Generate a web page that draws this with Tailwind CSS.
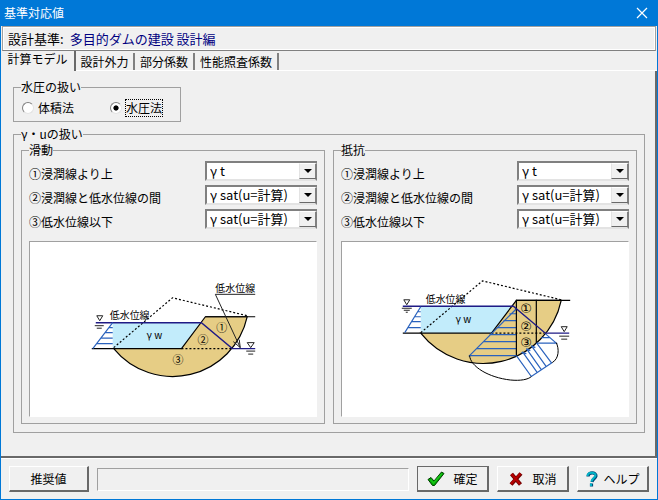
<!DOCTYPE html>
<html lang="ja">
<head>
  <meta charset="UTF-8">
  <meta name="viewport" content="width=device-width, initial-scale=1.0">
  <title>基準対応値</title>
  <script src="https://cdn.jsdelivr.net/npm/@tailwindcss/browser@4"></script>
</head>
<body class="min-h-screen flex flex-col bg-[#f0f0f0] border-x border-b border-[#0078d7] font-['Noto_Sans_CJK_JP',sans-serif] text-[12px] leading-4 text-black">

  <!-- タイトルバー -->
  <header class="h-[26px] flex items-center justify-between bg-[#0078d7] text-white pl-[3px] pr-[9px]">
    <h1>基準対応値</h1>
    <button type="button" aria-label="閉じる" class="w-3 h-3">
      <svg viewBox="0 0 12 12" class="w-3 h-3" fill="none" stroke="currentColor" stroke-width="1.2"><path d="M1 1L11 11M11 1L1 11"/></svg>
    </button>
  </header>

  <div class="h-[25px] flex items-center gap-[6px] border-t border-l border-r border-b border-t-[#a0a0a0] border-l-[#a0a0a0] border-r-[#a0a0a0] border-b-[#808080] outline outline-white -outline-offset-2 px-[5px] mx-px text-[13px]">
    <span>設計基準:</span>
    <span class="text-[#000080]">多目的ダムの建設 設計編</span>
  </div>

  <!-- タブ -->
  <div role="tablist" class="h-5 flex items-end">
    <button type="button" role="tab" aria-selected="true" class="h-5 w-[75px] pb-1 border-r-2 border-[#696969]">計算モデル</button>
    <div class="flex-1 flex border-b border-white">
      <button type="button" role="tab" class="h-[17px] w-[59px] border-r-2 border-[#808080]">設計外力</button>
      <button type="button" role="tab" class="h-[17px] w-[60px] border-r-2 border-[#808080]">部分係数</button>
      <button type="button" role="tab" class="h-[17px] w-[84px] border-r-2 border-[#808080]">性能照査係数</button>
    </div>
  </div>

  <main class="flex-1 border-r-2 border-b-2 border-[#696969] pt-2 pl-3 pr-[10px]">
    <fieldset class="w-[168px] h-[43px] border border-[#a0a0a0] pl-2">
      <legend class="-ml-px">水圧の扱い</legend>
      <div class="flex pt-[5px]">
        <label class="w-[88px] flex items-center gap-1">
          <input type="radio" name="method" class="appearance-none w-3 h-3 rounded-full bg-white border border-t-[#808080] border-l-[#808080] border-r-[#e3e3e3] border-b-[#e3e3e3] checked:bg-radial checked:from-black checked:from-[2px] checked:to-white checked:to-[3px]">
          <span>体積法</span>
        </label>
        <label class="flex items-center gap-1">
          <input type="radio" name="method" checked class="appearance-none w-3 h-3 rounded-full bg-white border border-t-[#808080] border-l-[#808080] border-r-[#e3e3e3] border-b-[#e3e3e3] checked:bg-radial checked:from-black checked:from-[2px] checked:to-white checked:to-[3px]">
          <span class="outline-1 outline-dotted outline-black">水圧法</span>
        </label>
      </div>
    </fieldset>

    <fieldset class="mt-1 border border-[#a0a0a0] px-[7px] pb-2">
      <legend>γ・uの扱い</legend>
      <div class="grid grid-cols-2 gap-2">

        <fieldset class="border border-[#a0a0a0] px-[7px] pb-[6px]">
          <legend>滑動</legend>
          <div class="flex flex-col gap-1 pt-[3px]">
            <div class="flex items-end justify-between">
              <label for="s1" class="-mb-px">①浸潤線より上</label>
              <div class="relative w-28 h-5">
                <select id="s1" class="appearance-none block w-full h-5 pl-[3px] text-[13px] leading-4 bg-white border-2 border-t-[#808080] border-l-[#808080] border-r-[#808080] border-b-[#e3e3e3]"><option>γ t</option></select>
                <span class="absolute right-0 top-0.5 w-[18px] h-4 flex items-center justify-center pointer-events-none bg-[#f0f0f0] border border-r-2 border-t-white border-l-[#e3e3e3] border-r-[#808080] border-b-[#696969]"><svg viewBox="0 0 8 4" class="w-2 h-1"><path d="M0 0H8L4 4Z"/></svg></span>
              </div>
            </div>
            <div class="flex items-end justify-between">
              <label for="s2" class="-mb-px">②浸潤線と低水位線の間</label>
              <div class="relative w-28 h-5">
                <select id="s2" class="appearance-none block w-full h-5 pl-[3px] text-[13px] leading-4 bg-white border-2 border-t-[#808080] border-l-[#808080] border-r-[#808080] border-b-[#e3e3e3]"><option>γ sat(u=計算)</option></select>
                <span class="absolute right-0 top-0.5 w-[18px] h-4 flex items-center justify-center pointer-events-none bg-[#f0f0f0] border border-r-2 border-t-white border-l-[#e3e3e3] border-r-[#808080] border-b-[#696969]"><svg viewBox="0 0 8 4" class="w-2 h-1"><path d="M0 0H8L4 4Z"/></svg></span>
              </div>
            </div>
            <div class="flex items-end justify-between">
              <label for="s3" class="-mb-px">③低水位線以下</label>
              <div class="relative w-28 h-5">
                <select id="s3" class="appearance-none block w-full h-5 pl-[3px] text-[13px] leading-4 bg-white border-2 border-t-[#808080] border-l-[#808080] border-r-[#808080] border-b-[#e3e3e3]"><option>γ sat(u=計算)</option></select>
                <span class="absolute right-0 top-0.5 w-[18px] h-4 flex items-center justify-center pointer-events-none bg-[#f0f0f0] border border-r-2 border-t-white border-l-[#e3e3e3] border-r-[#808080] border-b-[#696969]"><svg viewBox="0 0 8 4" class="w-2 h-1"><path d="M0 0H8L4 4Z"/></svg></span>
              </div>
            </div>
          </div>
          <!-- 滑動側の断面図 -->
          <div class="mt-3 bg-white border border-t-[#a0a0a0] border-l-[#a0a0a0] border-r-white border-b-white">
            <svg viewBox="29 241 287 175" class="block w-full" fill="none" stroke-width="1.2">
              <path d="M112 322H200L181 348H112Z" fill="#c2ecfb"/>
              <path d="M113 348H181L205 316H247A76.6 76.6 0 0 1 113 348Z" fill="#e6cd85" stroke="#000"/>
              <path d="M205 316H255M91 348H113" stroke="#000"/>
              <path d="M181 348H232" stroke="#000" stroke-dasharray="2 2"/>
              <path d="M113 347L172 297L247 315" stroke="#000" stroke-dasharray="2 2"/>
              <path d="M95 322H201L232 348H255" stroke="#1f1a85" stroke-width="1.4"/>
              <path d="M112 322L92 348M108 327H112M104 332H112M100 337.500H112M96 343H112" stroke="#2a62bd"/>
              <path d="M96 315H102L99 320ZM94 325H103M96 327.500H101M247 342H254L250.500 347ZM246 350.500H255M248 353.500H253" stroke="#222" stroke-width="1"/>
              <path d="M255 293.500H215L240 347M233 341L240 347L239 339" stroke="#222" stroke-width="1"/>
              <g fill="#000" font-size="10">
                <text x="215" y="291">低水位線</text>
                <text x="109" y="318">低水位線</text>
                <text x="146" y="338">γ w</text>
              </g>
              <g fill="#000" font-size="11">
                <text x="216" y="331">①</text>
                <text x="197" y="343">②</text>
                <text x="172" y="363">③</text>
              </g>
            </svg>
          </div>
        </fieldset>

        <fieldset class="border border-[#a0a0a0] px-[7px] pb-[6px]">
          <legend>抵抗</legend>
          <div class="flex flex-col gap-1 pt-[3px]">
            <div class="flex items-end justify-between">
              <label for="r1" class="-mb-px">①浸潤線より上</label>
              <div class="relative w-28 h-5">
                <select id="r1" class="appearance-none block w-full h-5 pl-[3px] text-[13px] leading-4 bg-white border-2 border-t-[#808080] border-l-[#808080] border-r-[#808080] border-b-[#e3e3e3]"><option>γ t</option></select>
                <span class="absolute right-0 top-0.5 w-[18px] h-4 flex items-center justify-center pointer-events-none bg-[#f0f0f0] border border-r-2 border-t-white border-l-[#e3e3e3] border-r-[#808080] border-b-[#696969]"><svg viewBox="0 0 8 4" class="w-2 h-1"><path d="M0 0H8L4 4Z"/></svg></span>
              </div>
            </div>
            <div class="flex items-end justify-between">
              <label for="r2" class="-mb-px">②浸潤線と低水位線の間</label>
              <div class="relative w-28 h-5">
                <select id="r2" class="appearance-none block w-full h-5 pl-[3px] text-[13px] leading-4 bg-white border-2 border-t-[#808080] border-l-[#808080] border-r-[#808080] border-b-[#e3e3e3]"><option>γ sat(u=計算)</option></select>
                <span class="absolute right-0 top-0.5 w-[18px] h-4 flex items-center justify-center pointer-events-none bg-[#f0f0f0] border border-r-2 border-t-white border-l-[#e3e3e3] border-r-[#808080] border-b-[#696969]"><svg viewBox="0 0 8 4" class="w-2 h-1"><path d="M0 0H8L4 4Z"/></svg></span>
              </div>
            </div>
            <div class="flex items-end justify-between">
              <label for="r3" class="-mb-px">③低水位線以下</label>
              <div class="relative w-28 h-5">
                <select id="r3" class="appearance-none block w-full h-5 pl-[3px] text-[13px] leading-4 bg-white border-2 border-t-[#808080] border-l-[#808080] border-r-[#808080] border-b-[#e3e3e3]"><option>γ sat(u=計算)</option></select>
                <span class="absolute right-0 top-0.5 w-[18px] h-4 flex items-center justify-center pointer-events-none bg-[#f0f0f0] border border-r-2 border-t-white border-l-[#e3e3e3] border-r-[#808080] border-b-[#696969]"><svg viewBox="0 0 8 4" class="w-2 h-1"><path d="M0 0H8L4 4Z"/></svg></span>
              </div>
            </div>
          </div>
          <!-- 抵抗側の断面図 -->
          <div class="mt-3 bg-white border border-t-[#a0a0a0] border-l-[#a0a0a0] border-r-white border-b-white">
            <svg viewBox="341 241 287 175" class="block w-full" fill="none" stroke-width="1.2">
              <path d="M420 305H513L491 332.500H420Z" fill="#c2ecfb"/>
              <path d="M420 332.500H491L516 299.500H561A80 80 0 0 1 420 332.500Z" fill="#e6cd85" stroke="#000"/>
              <path d="M516 299.500H570M402 332.500H420" stroke="#000"/>
              <path d="M491 332.500H544" stroke="#000" stroke-dasharray="2 2"/>
              <path d="M420 332L482 280L561 299" stroke="#000" stroke-dasharray="2 2"/>
              <path d="M516 308L469 355H516M509 313H516M503 320H516M496 327H516M489 334H516M483 341H516M476 348H516" stroke="#2a62bd"/>
              <path d="M545 333L556 342.500H536M541 337H550M516 355L531 376L552 362M522 351L537 372M526 348L541 369M531 345L546 366M536 342L551 362M521 352L526 353M526 348L530 350M531 345L535 347" stroke="#2a62bd"/>
              <path d="M469 355C470 366 488 377 510 379.500C520 380.500 528 379 531 376M552 362C559 358 559 348 556 342" stroke="#000" stroke-width="1"/>
              <path d="M516 299V355M536 299V342" stroke="#000"/>
              <path d="M402 305.500H513L545 332.500H569" stroke="#1f1a85" stroke-width="1.4"/>
              <path d="M420 306L404 332M417 311H420M414 316H420M411 321H420M407 327H420" stroke="#2a62bd"/>
              <path d="M403 299H409L406 304ZM401 307.500H411M403 309.500H409M405 311.500H407M561 326H567L564 331ZM559 335.500H569M561 338.500H567" stroke="#222" stroke-width="1"/>
              <g fill="#000" font-size="10">
                <text x="425" y="302">低水位線</text>
                <text x="455" y="322">γ w</text>
              </g>
              <g fill="#000" font-size="13" class="font-['DejaVu_Sans',sans-serif]">
                <text x="520" y="312">①</text>
                <text x="520" y="330">②</text>
                <text x="520" y="346">③</text>
              </g>
            </svg>
          </div>
        </fieldset>

      </div>
    </fieldset>
  </main>

  <!-- ボタン -->
  <footer class="h-[41px] flex items-center gap-2 px-2 border-t border-white">
    <button type="button" class="w-20 h-[26px] border border-t-white border-l-white border-r-2 border-b-2 border-r-[#696969] border-b-[#696969]">推奨値</button>
    <div class="flex-1 h-[23px] border border-t-[#a0a0a0] border-l-[#a0a0a0] border-r-white border-b-white"></div>
    <button type="button" class="w-[72px] h-[26px] flex items-center justify-center gap-2 border border-t-[#696969] border-l-[#696969] border-r-2 border-b-2 border-r-[#696969] border-b-[#696969]">
      <svg viewBox="0 0 18 16" class="w-[18px] h-4"><path d="M1 8.500L4 6.500L7 10L14.500 1L17 2.500L7.500 14.500H5.500Z" fill="#00a800" stroke="#003c00" stroke-width="1"/><path d="M3.500 8.500L6.500 12L15 2.500" fill="none" stroke="#18c418" stroke-width="1.500"/></svg>
      確定
    </button>
    <button type="button" class="w-[72px] h-[26px] flex items-center justify-center gap-2 border border-t-white border-l-white border-r-2 border-b-2 border-r-[#696969] border-b-[#696969]">
      <svg viewBox="0 0 16 16" class="w-4 h-4" fill="none"><path d="M3.500 3L12.500 13.500M13 2.500L3 13.500" stroke="#700000" stroke-width="4"/><path d="M3.500 3L12 13M12.500 2.500L3 13" stroke="#b80000" stroke-width="2"/></svg>
      取消
    </button>
    <button type="button" class="w-[72px] h-[26px] flex items-center justify-center gap-1 border border-t-white border-l-white border-r-2 border-b-2 border-r-[#696969] border-b-[#696969]">
      <svg viewBox="0 0 14 16" class="w-[14px] h-4" fill="none"><path d="M3 5.500C3 0.500 11.500 1 11 5C10.500 7.500 7.500 7.500 7 11M6.500 12.500V15.500" stroke="#004c78" stroke-width="3.200"/><path d="M2.500 5C3 0.500 11 1 10.500 4.500C10 7 7 7 6.500 10.500M6 12.500V15" stroke="#00b4c8" stroke-width="2"/></svg>
      ヘルプ
    </button>
  </footer>

</body>
</html>
